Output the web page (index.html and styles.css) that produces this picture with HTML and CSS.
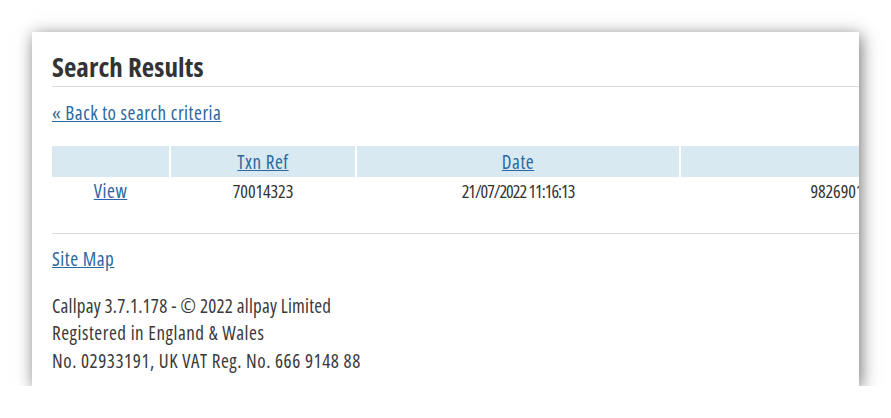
FILE: index.html
```html
<!DOCTYPE html>
<html lang="en">
<head>
    <meta charset="UTF-8">
    <title>Search Results</title>
    <link rel="stylesheet" href="styles.css">
</head>
<body>
    <div class="page">
        <div class="content">
            <h1>Search Results</h1>
            <p class="back"><a href="#">&laquo; Back to search criteria</a></p>

            <div class="results">
                <table class="grid">
                    <thead>
                        <tr>
                            <th class="col-action"></th>
                            <th class="col-ref"><a href="#">Txn Ref</a></th>
                            <th class="col-date"><a href="#">Date</a></th>
                            <th class="col-card"><a href="#">Ref</a></th>
                        </tr>
                    </thead>
                    <tbody>
                        <tr>
                            <td class="col-action"><a href="#">View</a></td>
                            <td class="col-ref num">70014323</td>
                            <td class="col-date num date">21/07/2022 11:16:13</td>
                            <td class="col-card num">98269012345678901234</td>
                        </tr>
                    </tbody>
                </table>
            </div>
        </div>

        <div class="footer">
            <p class="sitemap"><a href="#">Site Map</a></p>
            <p class="version">Callpay 3.7.1.178 - &copy; 2022 allpay Limited</p>
            <p>Registered in England &amp; Wales</p>
            <p>No. 02933191, UK VAT Reg. No. 666 9148 88</p>
        </div>
    </div>
</body>
</html>
```

FILE: styles.css
```css
* {
    margin: 0;
    padding: 0;
    box-sizing: border-box;
}

body {
    font-family: 'Open Sans', 'Noto Sans', sans-serif;
    font-stretch: 75%;
    background: #fff;
    color: #3a3a3a;
    font-size: 19px;
    letter-spacing: 0.55px;
    padding: 32px 32px 0 32px;
    overflow: hidden;
}

.page {
    background: white;
    width: 827px;
    height: 354px;
    box-shadow: 2px 3px 16px rgba(0, 0, 0, 0.55);
    overflow: hidden;
    padding: 20px 0 0 20px;
}

a {
    color: #2b67a0;
}

h1 {
    font-size: 27px;
    font-weight: bold;
    letter-spacing: 0.1px;
    color: #333;
    line-height: 30px;
    padding-bottom: 4px;
    border-bottom: 1px solid #dcdcdc;
}

.back {
    margin-top: 15px;
    line-height: 22px;
}

.results {
    margin-top: 22px;
    padding-bottom: 28px;
    border-bottom: 1px solid #dcdcdc;
}

.grid {
    border-collapse: separate;
    border-spacing: 2px 0;
    margin-left: -2px;
    table-layout: fixed;
    width: 1043px;
}

.grid th {
    background: #d8e9f1;
    font-weight: normal;
    height: 31px;
    text-align: center;
}

.grid td {
    text-align: center;
    height: 28px;
    white-space: nowrap;
}

.grid td.num {
    font-size: 18px;
    letter-spacing: -0.1px;
    color: #333;
}

.grid td.date {
    letter-spacing: -1px;
}

.col-action { width: 117px; }
.col-ref { width: 184px; }
.col-date { width: 322px; }
.col-card { width: 410px; }

.footer {
    padding-top: 12px;
}

.footer p {
    line-height: 27.5px;
}

.footer .version {
    letter-spacing: 0.2px;
}

.footer .sitemap {
    margin-bottom: 19px;
}
```
